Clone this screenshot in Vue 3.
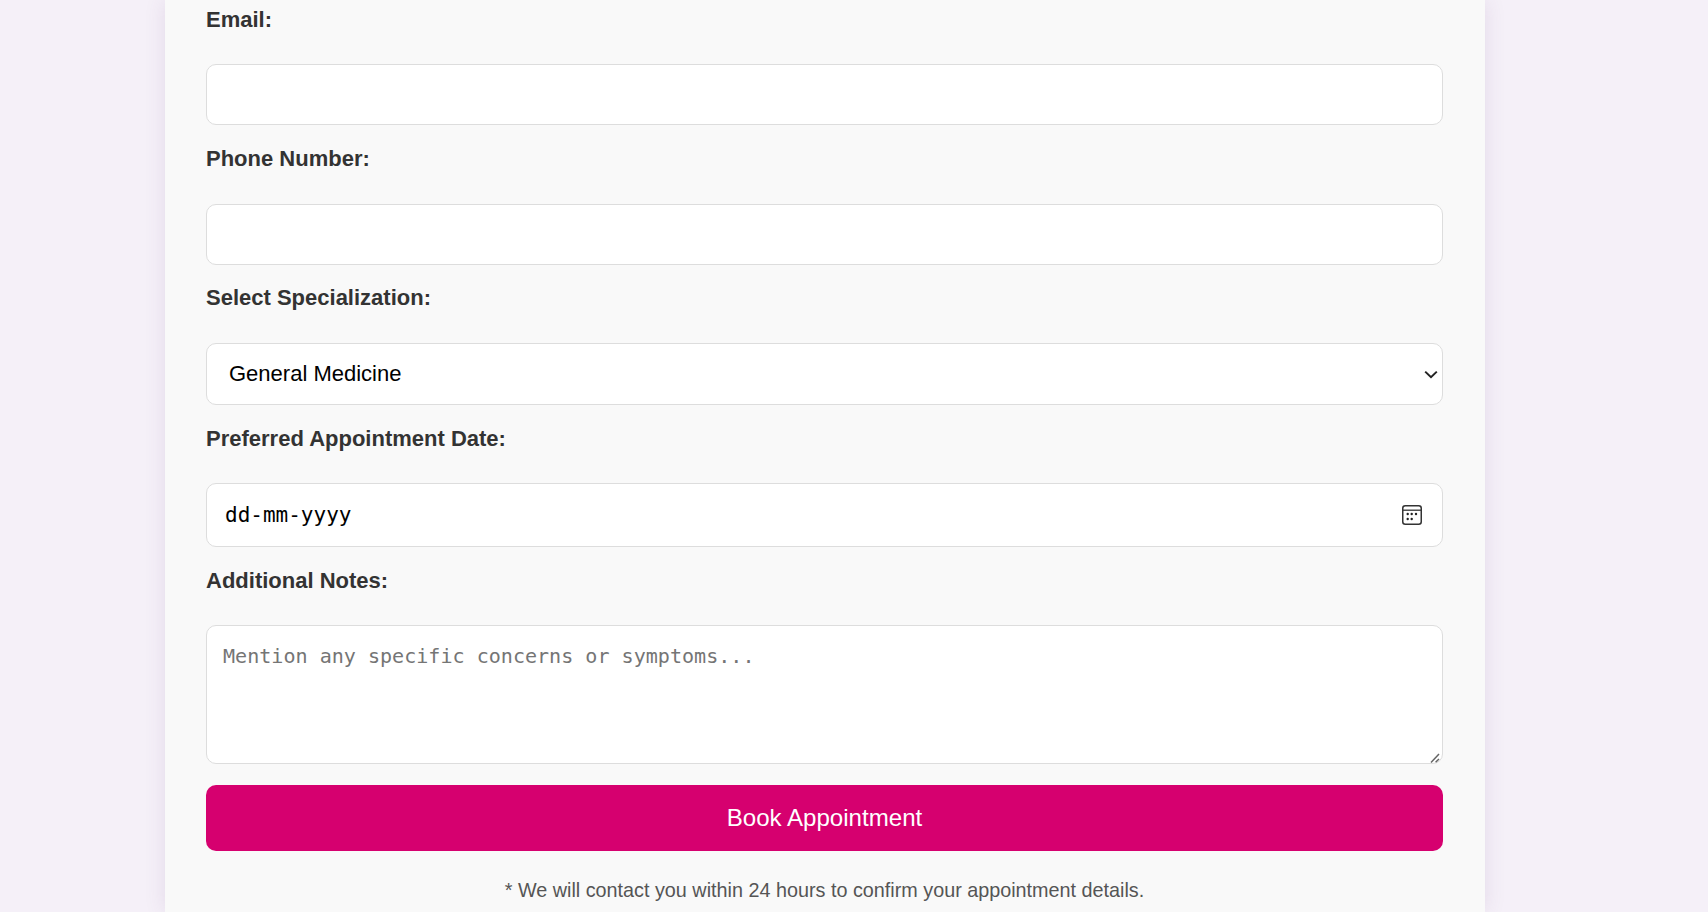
<script setup>
import { ref } from 'vue'
const specializations = ['General Medicine', 'Cardiology', 'Dermatology', 'Pediatrics', 'Orthopedics']
const selected = ref(specializations[0])
const calendarDots = [
  [5.7, 9], [9.7, 9], [14, 9],
  [5.7, 14], [9.7, 14],
]
</script>

<template>
  <main class="page">
    <form class="card" @submit.prevent>
      <label class="label first" for="email">Email:</label>
      <input id="email" class="control" type="email" />

      <label class="label phone-label" for="phone">Phone Number:</label>
      <input id="phone" class="control" type="tel" />

      <label class="label spec-label" for="spec">Select Specialization:</label>
      <div class="wrap">
        <select id="spec" v-model="selected" class="control select">
          <option v-for="s in specializations" :key="s">{{ s }}</option>
        </select>
        <svg class="chevron" width="14" height="9" viewBox="0 0 14 9" aria-hidden="true">
          <path d="M1.2 1.6 7 7.2l5.8-5.6" fill="none" stroke="#222" stroke-width="2" />
        </svg>
      </div>

      <label class="label" for="date">Preferred Appointment Date:</label>
      <div class="wrap">
        <input id="date" class="control date" type="text" value="dd-mm-yyyy" />
        <svg class="calendar" width="20" height="20" viewBox="0 0 20 20" aria-hidden="true">
          <rect x="0.75" y="0.75" width="18.5" height="18.5" rx="2.5" fill="none" stroke="#333" stroke-width="1.5" />
          <path d="M1 5.2h18" stroke="#333" stroke-width="1.3" />
          <circle v-for="d in calendarDots" :key="d.join()" :cx="d[0]" :cy="d[1]" r="1.2" fill="#222" />
        </svg>
      </div>

      <label class="label" for="notes">Additional Notes:</label>
      <div class="wrap">
        <textarea id="notes" class="control notes" placeholder="Mention any specific concerns or symptoms..."></textarea>
        <svg class="grip" width="10" height="10" viewBox="0 0 10 10" aria-hidden="true">
          <path d="M1 9.5 9 1M5.6 9.3 9 6" fill="none" stroke="#666" stroke-width="1.5" />
        </svg>
      </div>

      <button class="submit" type="submit">Book Appointment</button>
      <p class="note">* We will contact you within 24 hours to confirm your appointment details.</p>
    </form>
  </main>
</template>

<style>
html, body { margin: 0; height: 100%; overflow: hidden; background: #f5f0f8; }
</style>

<style scoped>
.page {
  box-sizing: border-box;
  height: 912px;
  overflow: hidden;
  padding-left: 165px;
  background: #f5f0f8;
  font-family: "Liberation Sans", Arial, sans-serif;
}
.card {
  box-sizing: border-box;
  width: 1320px;
  height: 912px;
  padding: 7px 42px 0 41px;
  background: #f9f9f9;
  box-shadow: 0 0 20px rgba(100, 60, 120, 0.12);
  display: flex;
  flex-direction: column;
}
.label {
  display: block;
  height: 25px;
  line-height: 25px;
  margin: 21px 0 32px;
  font-size: 22px;
  font-weight: 700;
  color: #333;
}
.label.first { margin-top: 0; }
.label.phone-label { margin-bottom: 33px; }
.label.spec-label { margin: 20px 0 33px; }
.wrap { position: relative; }
.control {
  box-sizing: border-box;
  display: block;
  width: 100%;
  height: 61px;
  margin: 0;
  padding: 15px;
  background: #fff;
  border: 1px solid #ddd;
  border-radius: 10px;
  outline: none;
  font-family: "Liberation Sans", Arial, sans-serif;
  font-size: 22px;
  color: #000;
}
.select {
  height: 62px;
  padding: 15px 15px 16px 22px;
  appearance: none;
}
.chevron {
  position: absolute;
  right: 5px;
  top: 27px;
  pointer-events: none;
}
.date {
  height: 64px;
  padding-left: 18px;
  font-family: "DejaVu Sans Mono", monospace;
  font-size: 21px;
}
.calendar {
  position: absolute;
  right: 21px;
  top: 22px;
  pointer-events: none;
}
.notes {
  height: 139px;
  padding: 18px 16px 16px;
  resize: vertical;
  font-family: "DejaVu Sans Mono", monospace;
  font-size: 20.07px;
}
.notes::-webkit-resizer { background: transparent; }
.grip {
  position: absolute;
  right: 3px;
  bottom: 1px;
  pointer-events: none;
}
.submit {
  margin-top: 21px;
  height: 66px;
  border: 0;
  border-radius: 10px;
  background: #d6006f;
  color: #fff;
  font-family: "Liberation Sans", Arial, sans-serif;
  font-size: 24.1px;
}
.note {
  margin: 26px 0 0;
  text-align: center;
  font-size: 19.8px;
  line-height: 26px;
  color: #555;
}
</style>
